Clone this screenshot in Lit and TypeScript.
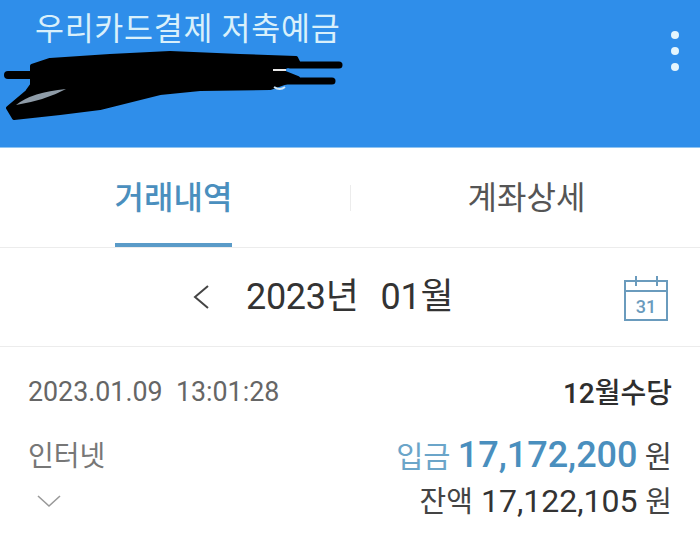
import { LitElement, html, css } from "lit";
import { customElement } from "lit/decorators.js";

@customElement("app-root")
export class AppRoot extends LitElement {
  static styles = css`
    :host {
      display: block;
      width: 700px;
      height: 541px;
      overflow: hidden;
      background: #fff;
      font-family: Roboto, "Noto Sans CJK KR", sans-serif;
      color: #333;
    }
    .header {
      position: relative;
      height: 148px;
      box-sizing: border-box;
      padding: 10px 0 0 35px;
      background: #2f8eea;
      border-bottom: 1px solid #8fc4f2;
    }
    .title {
      font-size: 31.5px;
      line-height: 40px;
      letter-spacing: 0.7px;
      color: #d9f0fb;
    }
    .scribble {
      position: absolute;
      left: 0;
      top: 0;
    }
    .dots {
      position: absolute;
      right: 21px;
      top: 31px;
      display: flex;
      flex-direction: column;
      gap: 8px;
    }
    .dots i {
      width: 8px;
      height: 8px;
      border-radius: 50%;
      background: #e4f5fd;
    }
    .tabs {
      height: 100px;
      display: grid;
      grid-template-columns: 351px 349px;
      align-items: center;
      border-bottom: 1px solid #ececec;
      box-sizing: border-box;
    }
    .tab {
      position: relative;
      height: 99px;
      display: flex;
      align-items: center;
      justify-content: center;
      color: #555;
      padding-left: 2px;
      box-sizing: border-box;
    }
    .tab.first {
      padding-left: 0;
      padding-right: 4px;
    }
    .tab.first::after {
      content: "";
      position: absolute;
      right: 0;
      top: 37px;
      height: 26px;
      width: 1px;
      background: #ececec;
    }
    .tab-label {
      position: relative;
      font-size: 32px;
      line-height: 40px;
    }
    .active {
      color: #4a8fbe;
      font-weight: 500;
    }
    .active::after {
      content: "";
      position: absolute;
      left: 0;
      right: 0;
      top: 65px;
      height: 4px;
      background: #5a9bc8;
    }
    .month {
      height: 99px;
      box-sizing: border-box;
      border-bottom: 1px solid #ececec;
      display: flex;
      align-items: center;
      padding: 0 32px 0 192px;
    }
    .month-text {
      margin-left: 36px;
      display: flex;
      gap: 22px;
      font-size: 36px;
      line-height: 40px;
      color: #333;
      letter-spacing: -0.3px;
    }
    .cal {
      margin-left: auto;
      margin-top: 4px;
    }
    .cal text {
      font-family: Roboto, sans-serif;
      font-size: 18px;
      font-weight: 500;
      fill: #6a9bbd;
    }
    .detail {
      padding: 25px 28px 0 28px;
      display: grid;
      grid-template-columns: 1fr auto;
    }
    .when {
      font-size: 26.8px;
      line-height: 40px;
      color: #666;
      white-space: pre;
    }
    .memo {
      margin-top: 2px;
      font-size: 28px;
      line-height: 40px;
      color: #2e2e2e;
      font-weight: 500;
      text-align: right;
    }
    .kind {
      font-size: 28px;
      line-height: 40px;
      margin-top: 23px;
      color: #777;
    }
    .amt {
      margin-top: 21px;
      line-height: 40px;
      font-size: 29.5px;
      color: #444;
      text-align: right;
      white-space: pre;
    }
    .in {
      color: #6ba5c9;
    }
    .num {
      color: #4a8fbe;
      font-size: 36px;
      font-weight: 500;
    }
    .chev {
      display: block;
      margin: 17px 0 0 8px;
    }
    .bal {
      margin-top: 4px;
      font-size: 32px;
      line-height: 40px;
      color: #333;
      text-align: right;
      white-space: pre;
    }
    .bal .u {
      font-size: 29px;
      color: #444;
    }
  `;

  render() {
    return html`
      <div class="header">
        <div class="title">우리카드결제 저축예금</div>
        <svg class="scribble" width="350" height="130" viewBox="0 0 350 130">
          <path
            fill="#000"
            stroke="#000"
            stroke-width="4"
            stroke-linejoin="round"
            d="M32 66 L50 60 L110 56 L170 53 L240 56 L296 58 L298 62 L278 70 L298 78 L270 88 L200 89 L160 93 L100 108 L60 113 L14 118 L8 108 L27 92 L32 85Z"
          />
          <path d="M8 75 H40" stroke="#000" stroke-width="8" stroke-linecap="round" />
          <path d="M290 65 H339" stroke="#000" stroke-width="7" stroke-linecap="round" />
          <path d="M285 81 H332" stroke="#000" stroke-width="7" stroke-linecap="round" />
          <path d="M16 105 Q32 92 66 89 Q46 100 16 105Z" fill="#8f9ca8" />
          <path d="M273 70 H286" stroke="#e8e8e8" stroke-width="2" />
          <path d="M274 87 Q280 91 285 87" stroke="#cfe6f7" stroke-width="2" fill="none" />
        </svg>
        <div class="dots"><i></i><i></i><i></i></div>
      </div>
      <div class="tabs">
        <div class="tab first"><span class="tab-label active">거래내역</span></div>
        <div class="tab"><span class="tab-label">계좌상세</span></div>
      </div>
      <div class="month">
        <svg width="18" height="28" viewBox="0 0 18 28">
          <path d="M16 3 L3 14 L16 25" fill="none" stroke="#444" stroke-width="2" />
        </svg>
        <span class="month-text"><span>2023년</span><span>01월</span></span>
        <svg class="cal" width="44" height="46" viewBox="0 0 44 46">
          <path d="M1 5 H43 V44 H1Z M1 15 H43" fill="none" stroke="#6a9bbd" stroke-width="2" />
          <path d="M12 0 V10 M33 0 V10" stroke="#6a9bbd" stroke-width="2" />
          <text x="22" y="36.5" text-anchor="middle">31</text>
        </svg>
      </div>
      <div class="detail">
        <div class="when">2023.01.09  13:01:28</div>
        <div class="memo">12월수당</div>
        <div class="kind">인터넷</div>
        <div class="amt"><span class="in">입금</span> <span class="num">17,172,200</span> 원</div>
        <div>
          <svg class="chev" width="26" height="14" viewBox="0 0 26 14">
            <path d="M2 2 L13 12 L24 2" fill="none" stroke="#999" stroke-width="1.6" />
          </svg>
        </div>
        <div class="bal"><span class="u">잔액</span> 17,122,105 <span class="u">원</span></div>
      </div>
    `;
  }
}
